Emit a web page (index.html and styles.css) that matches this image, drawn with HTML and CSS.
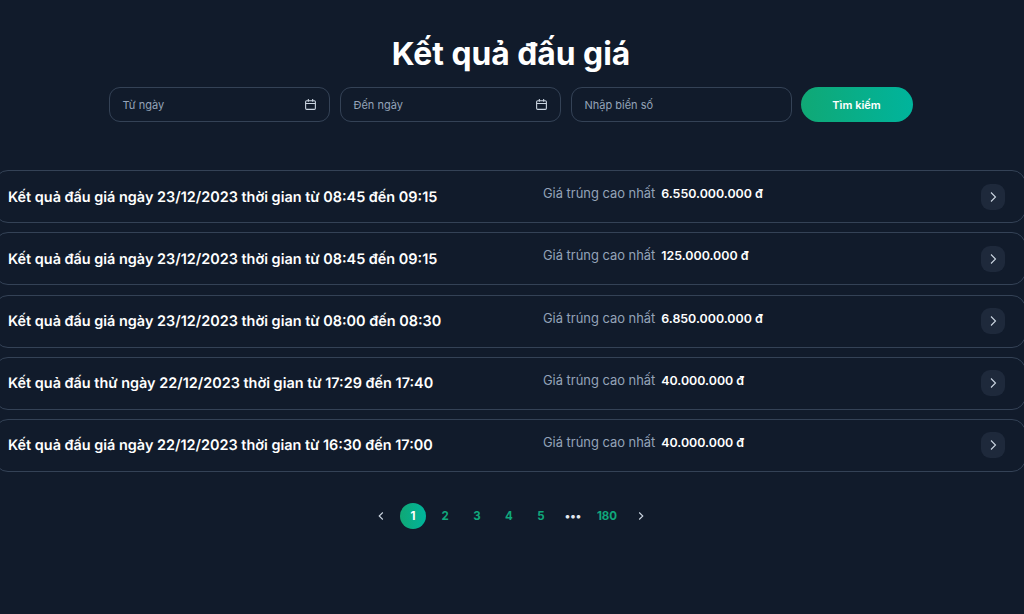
FILE: index.html
```html
<!DOCTYPE html>
<html lang="vi">
<head>
<meta charset="utf-8">
<title>Kết quả đấu giá</title>
<link rel="stylesheet" href="styles.css">
</head>
<body>
<main class="page">
  <h1 class="title">Kết quả đấu giá</h1>
  <form class="filters">
    <div class="field"><span class="placeholder">Từ ngày</span>
      <svg class="cal" width="13" height="13" viewBox="0 0 12 12" fill="none" stroke="currentColor" stroke-width="1"><rect x="1.5" y="2.5" width="9" height="8" rx="1"/><path d="M1.5 5h9M4 1v2.5M8 1v2.5"/></svg>
    </div>
    <div class="field"><span class="placeholder">Đến ngày</span>
      <svg class="cal" width="13" height="13" viewBox="0 0 12 12" fill="none" stroke="currentColor" stroke-width="1"><rect x="1.5" y="2.5" width="9" height="8" rx="1"/><path d="M1.5 5h9M4 1v2.5M8 1v2.5"/></svg>
    </div>
    <div class="field"><span class="placeholder">Nhập biển số</span></div>
    <button class="search" type="button">Tìm kiếm</button>
  </form>
  <section class="list">
    <article class="row"><h2 class="row-title">Kết quả đấu giá ngày 23/12/2023 thời gian từ 08:45 đến 09:15</h2><p class="price"><span class="price-label">Giá trúng cao nhất</span><b class="price-value">6.550.000.000 đ</b></p><span class="go"><svg width="12" height="12" viewBox="0 0 12 12" fill="none" stroke="currentColor" stroke-width="1.1"><path d="M4 1.5 8.5 6 4 10.5"/></svg></span></article>
    <article class="row"><h2 class="row-title">Kết quả đấu giá ngày 23/12/2023 thời gian từ 08:45 đến 09:15</h2><p class="price"><span class="price-label">Giá trúng cao nhất</span><b class="price-value">125.000.000 đ</b></p><span class="go"><svg width="12" height="12" viewBox="0 0 12 12" fill="none" stroke="currentColor" stroke-width="1.1"><path d="M4 1.5 8.5 6 4 10.5"/></svg></span></article>
    <article class="row"><h2 class="row-title">Kết quả đấu giá ngày 23/12/2023 thời gian từ 08:00 đến 08:30</h2><p class="price"><span class="price-label">Giá trúng cao nhất</span><b class="price-value">6.850.000.000 đ</b></p><span class="go"><svg width="12" height="12" viewBox="0 0 12 12" fill="none" stroke="currentColor" stroke-width="1.1"><path d="M4 1.5 8.5 6 4 10.5"/></svg></span></article>
    <article class="row"><h2 class="row-title">Kết quả đấu thử ngày 22/12/2023 thời gian từ 17:29 đến 17:40</h2><p class="price"><span class="price-label">Giá trúng cao nhất</span><b class="price-value">40.000.000 đ</b></p><span class="go"><svg width="12" height="12" viewBox="0 0 12 12" fill="none" stroke="currentColor" stroke-width="1.1"><path d="M4 1.5 8.5 6 4 10.5"/></svg></span></article>
    <article class="row"><h2 class="row-title">Kết quả đấu giá ngày 22/12/2023 thời gian từ 16:30 đến 17:00</h2><p class="price"><span class="price-label">Giá trúng cao nhất</span><b class="price-value">40.000.000 đ</b></p><span class="go"><svg width="12" height="12" viewBox="0 0 12 12" fill="none" stroke="currentColor" stroke-width="1.1"><path d="M4 1.5 8.5 6 4 10.5"/></svg></span></article>
  </section>
  <nav class="pager">
    <span class="pg arrow"><svg width="10" height="10" viewBox="0 0 10 10" fill="none" stroke="currentColor" stroke-width="1.1"><path d="M6.8 1.5 3.2 5l3.6 3.5"/></svg></span>
    <span class="pg active">1</span>
    <span class="pg">2</span>
    <span class="pg">3</span>
    <span class="pg">4</span>
    <span class="pg">5</span>
    <span class="pg dots">•••</span>
    <span class="pg wide">180</span>
    <span class="pg arrow next"><svg width="10" height="10" viewBox="0 0 10 10" fill="none" stroke="currentColor" stroke-width="1.1"><path d="M3.2 1.5 6.8 5 3.2 8.5"/></svg></span>
  </nav>
</main>
</body>
</html>
```
FILE: styles.css
```css
* { box-sizing: border-box; }
html, body { margin: 0; height: 100%; }
body {
  background: #111b2b;
  color: #fff;
  font-family: Inter, "Liberation Sans", sans-serif;
  overflow: hidden;
}
.page { display: flex; flex-direction: column; height: 614px; padding-top: 34px; overflow: hidden; }
.title {
  margin: 0 2px 0 0;
  height: 39px;
  font-size: 31.8px;
  line-height: 39px;
  font-weight: 700;
  text-align: center;
}
.filters {
  display: flex;
  gap: 10px;
  justify-content: center;
  margin: 14px 3px 0 0;
}
.field {
  display: flex;
  align-items: center;
  justify-content: space-between;
  width: 221px;
  height: 35px;
  padding: 0 12px 0 13px;
  border: 1px solid #344256;
  border-radius: 11px;
}
.placeholder { font-size: 11px; color: #94a3b8; }
.cal { color: #cbd5e1; }
.search {
  width: 112px;
  height: 35px;
  margin-left: -1px;
  border: 0;
  border-radius: 18px;
  background: linear-gradient(90deg, #10a875, #00b49c);
  color: #fff;
  font: 600 11px Inter, "Liberation Sans", sans-serif;
}
.list {
  display: flex;
  flex-direction: column;
  gap: 9.1px;
  margin: 48.4px 0 0 -6px;
}
.row {
  display: flex;
  align-items: center;
  flex: none;
  width: 1032px;
  height: 53px;
  padding: 0 20px 0 13px;
  border: 1px solid #344256;
  border-radius: 14px;
}
.row-title {
  width: 535px;
  margin: 1px 0 0;
  font-size: 14.43px;
  font-weight: 600;
  text-rendering: geometricPrecision;
  flex: none;
}
.price { display: flex; gap: 6px; align-items: baseline; margin: -6px 0 0; font-size: 12.9px; flex: 1; }
.price-label { color: #94a3b8; }
.price-value { font-size: 12.4px; font-weight: 600; color: #fff; }
.go {
  display: flex;
  align-items: center;
  justify-content: center;
  width: 24px;
  height: 26px;
  border-radius: 9px;
  background: #1e293b;
  color: #cbd5e1;
}
.pager {
  display: flex;
  align-items: center;
  justify-content: center;
  margin: 31px 0 0 0;
  height: 26px;
  padding-right: 2px;
  gap: 6px;
}
.pg {
  display: flex;
  align-items: center;
  justify-content: center;
  min-width: 26px;
  height: 26px;
  font-size: 11.5px;
  font-weight: 700;
  color: #10a87c;
}
.arrow { color: #cbd5e1; }
.active { border-radius: 50%; background: linear-gradient(90deg, #10a875, #00b49c); color: #fff; }
.dots { margin-right: 1px; color: #e2e8f0; }
.wide { min-width: 28px; }
.next { margin-left: 1px; }
```
